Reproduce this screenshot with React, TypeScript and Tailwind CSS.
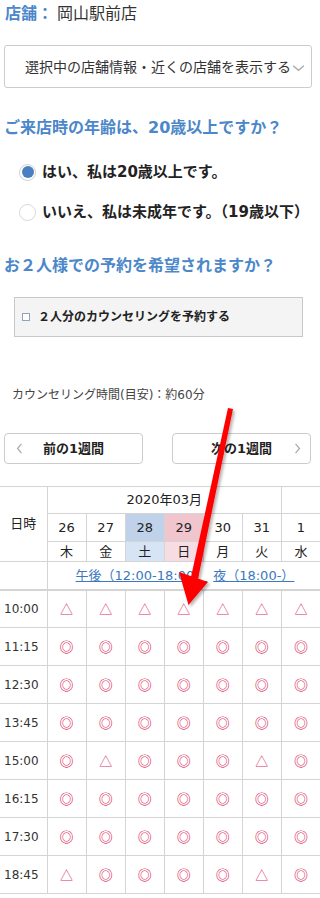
import React from 'react';

type Day = { d: string; w: string; sat?: boolean; sun?: boolean };

const days: Day[] = [
  { d: '26', w: '木' },
  { d: '27', w: '金' },
  { d: '28', w: '土', sat: true },
  { d: '29', w: '日', sun: true },
  { d: '30', w: '月' },
  { d: '31', w: '火' },
  { d: '1', w: '水' },
];

// o = ◎, t = △
const slots: { time: string; marks: string }[] = [
  { time: '10:00', marks: 'ttttttt' },
  { time: '11:15', marks: 'ooooooo' },
  { time: '12:30', marks: 'ooooooo' },
  { time: '13:45', marks: 'ooooooo' },
  { time: '15:00', marks: 'otooote' },
  { time: '16:15', marks: 'ooooooo' },
  { time: '17:30', marks: 'ooooooo' },
  { time: '18:45', marks: 'tooooto' },
];

const cell = 'border border-[#d4d4d4] p-0 text-center align-middle';

function Chevron({ dir, className }: { dir: 'left' | 'right' | 'down'; className?: string }) {
  const d = dir === 'left' ? 'M7 1 L2 7 L7 13' : dir === 'right' ? 'M2 1 L7 7 L2 13' : 'M1 2 L7 7 L13 2';
  const vb = dir === 'down' ? '0 0 14 9' : '0 0 9 14';
  return (
    <svg viewBox={vb} className={className} fill="none" stroke="currentColor" strokeWidth="1.6">
      <path d={d} />
    </svg>
  );
}

export default function App() {
  return (
    <div className="relative w-[320px] h-[898px] overflow-hidden bg-white text-[#333] font-['DejaVu_Sans','Noto_Sans_CJK_JP',sans-serif]">
      {/* store */}
      <div className="pl-[5px] pt-[4px] text-[16px] leading-[20px]">
        <span className="font-bold text-[#4b87c9]">店舗：</span>
        <span className="ml-1">岡山駅前店</span>
      </div>

      {/* select */}
      <div className="mt-[21px] ml-1 w-[308px] h-[43px] border border-[#cccccc] rounded-[3px] flex items-center pl-[20px] text-[14px] leading-[18px] text-[#333]">
        <span>選択中の店舗情報・近くの店舗を表示する</span>
        <Chevron dir="down" className="w-[13px] h-[8px] text-[#aaaaaa] ml-[1px] mt-[2px]" />
      </div>

      <h2 className="mt-[28px] pl-1 text-[16px] leading-[24px] font-bold text-[#4b87c9]">
        ご来店時の年齢は、20歳以上ですか？
      </h2>

      {/* radios */}
      <label className="mt-[20px] ml-[19px] flex items-center gap-[6px] h-[24px] text-[15px] font-bold text-[#222]">
        <span className="w-[17px] h-[17px] rounded-full border border-[#cfcfcf] bg-white flex items-center justify-center">
          <span className="w-[12px] h-[12px] rounded-full bg-[#4a7fc0]" />
        </span>
        はい、私は20歳以上です。
      </label>
      <label className="mt-[16px] ml-[19px] flex items-center gap-[6px] h-[24px] text-[15px] font-bold text-[#222] whitespace-nowrap">
        <span className="w-[17px] h-[17px] rounded-full border border-[#d8d8d8] bg-white" />
        いいえ、私は未成年です。（19歳以下）
      </label>

      <h2 className="mt-[30px] pl-1 text-[16px] leading-[24px] font-bold text-[#4b87c9]">
        お２人様での予約を希望されますか？
      </h2>

      {/* pair checkbox */}
      <div className="mt-[19px] ml-[14px] w-[289px] h-[40px] bg-[#f4f4f4] border border-[#c8c8c8] flex items-center pl-[7px] gap-[8px]">
        <span className="w-[8px] h-[8px] border border-[#8fa3c2] bg-white" />
        <span className="text-[12px] leading-[16px] font-bold text-[#222]">２人分のカウンセリングを予約する</span>
      </div>

      <p className="mt-[50px] pl-[12px] text-[12px] leading-[16px] text-[#444]">カウンセリング時間(目安)：約60分</p>

      {/* week navigation */}
      <div className="mt-[30px] ml-1 flex gap-[29px]">
        <button className="relative w-[139px] h-[31px] border border-[#cccccc] rounded-[4px] bg-white text-[13px] font-bold text-[#222]">
          <Chevron dir="left" className="absolute left-[11px] top-[9px] w-[7px] h-[11px] text-[#aaaaaa]" />
          前の1週間
        </button>
        <button className="relative w-[139px] h-[31px] border border-[#cccccc] rounded-[4px] bg-white text-[13px] font-bold text-[#222]">
          次の1週間
          <Chevron dir="right" className="absolute right-[9px] top-[9px] w-[7px] h-[11px] text-[#aaaaaa]" />
        </button>
      </div>

      {/* calendar */}
      <div className="mt-[22px] w-[320px] overflow-hidden">
        <table className="table-fixed border-collapse w-[321px] text-[13px] text-[#222]">
          <colgroup>
            <col className="w-[47px]" />
            {days.map((d, i) => (
              <col key={i} className="w-[39px]" />
            ))}
          </colgroup>
          <tbody>
            <tr className="h-[27px]">
              <td rowSpan={3} className={`${cell} border-l-0 text-[13px]`}>日時</td>
              <td colSpan={6} className={cell}>2020年03月</td>
              <td className={cell} />
            </tr>
            <tr className="h-[28px]">
              {days.map((d, i) => (
                <td key={i} className={`${cell} ${d.sat ? 'bg-[#bfd2e9]' : d.sun ? 'bg-[#f1c5cd]' : ''}`}>{d.d}</td>
              ))}
            </tr>
            <tr className="h-[20px]">
              {days.map((d, i) => (
                <td key={i} className={`${cell} leading-[18px] ${d.sat ? 'bg-[#d6e4f4]' : d.sun ? 'bg-[#f7dce4]' : ''}`}>{d.w}</td>
              ))}
            </tr>
            <tr className="h-[28px]">
              <td className={`${cell} border-l-0 border-b-2`} />
              <td colSpan={7} className={`${cell} border-b-2 text-left pl-[28px] text-[#3b78c0] whitespace-nowrap`}>
                <a href="#pm" className="underline">午後（12:00-18:00）</a>
                <a href="#night" className="underline ml-[6px]">夜（18:00-）</a>
              </td>
            </tr>
            {slots.map((s) => (
              <tr key={s.time} className="h-[38px]">
                <td className={`${cell} border-l-0 text-left pl-[4px] text-[12px] text-[#333]`}>{s.time}</td>
                {days.map((_, i) => (
                  <td
                    key={i}
                    className={`${cell} text-[#dc3466] font-['Noto_Sans_CJK_JP',sans-serif] ${s.marks[i] === 't' ? 'text-[13px]' : 'text-[14px] font-bold'}`}
                  >
                    {s.marks[i] === 't' ? '△' : '◎'}
                  </td>
                ))}
              </tr>
            ))}
          </tbody>
        </table>
      </div>

      {/* annotation arrow */}
      <svg className="pointer-events-none absolute left-0 top-0 w-[320px] h-[898px]" viewBox="0 0 320 898">
        <defs>
          <filter id="sh" x="-20%" y="-20%" width="140%" height="140%">
            <feDropShadow dx="2" dy="2" stdDeviation="1.5" floodColor="#000" floodOpacity="0.3" />
          </filter>
        </defs>
        <g filter="url(#sh)" fill="#ff0000" stroke="none">
          <polygon points="228,408 233,409 198,579 191,577" />
          <polygon points="188.5,605 179,572 208,582" />
        </g>
      </svg>
    </div>
  );
}
